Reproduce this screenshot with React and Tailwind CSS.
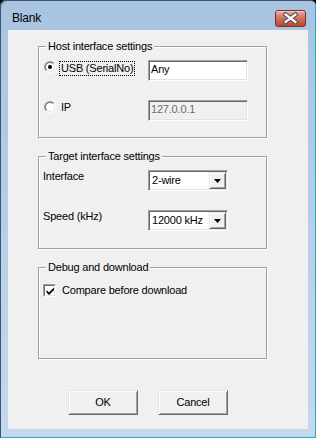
import React from "react";

// classic 3D edges
const SUNKEN =
  "border border-t-[#a0a0a0] border-l-[#a0a0a0] border-r-white border-b-white shadow-[inset_1px_1px_0_#696969,inset_-1px_-1px_0_#e3e3e3]";
const RAISED =
  "border border-t-[#e3e3e3] border-l-[#e3e3e3] border-r-[#696969] border-b-[#696969] shadow-[inset_1px_1px_0_#fff,inset_-1px_-1px_0_#a0a0a0]";

function Group({ title, children, className = "" }) {
  return (
    <div className={`w-[229px] border border-[#a0a0a0] shadow-[inset_1px_1px_0_#fff,1px_1px_0_#fff] ${className}`}>
      <div className="-mt-[7px] ml-[7px] w-fit bg-[#f0f0f0] px-[2px] leading-[13px]">{title}</div>
      {children}
    </div>
  );
}

function Radio({ checked }) {
  return (
    <div className="w-[12px] h-[12px] rounded-full border border-t-[#a0a0a0] border-l-[#a0a0a0] border-r-white border-b-white">
      <div className="w-full h-full rounded-full border border-t-[#696969] border-l-[#696969] border-r-[#e3e3e3] border-b-[#e3e3e3] bg-white flex items-center justify-center">
        {checked && <div className="w-[4px] h-[4px] rounded-full bg-black" />}
      </div>
    </div>
  );
}

function Combo({ value }) {
  return (
    <div className={`w-[80px] h-[21px] bg-white p-[1px] flex ${SUNKEN}`}>
      <div className="flex-1 pl-[2px] leading-[17px] whitespace-nowrap overflow-hidden">{value}</div>
      <div className={`w-[17px] h-[17px] bg-[#f0f0f0] flex items-center justify-center ${RAISED}`}>
        <svg width="7" height="4" viewBox="0 0 7 4">
          <path d="M0 0H7L3.5 4Z" fill="#000" />
        </svg>
      </div>
    </div>
  );
}

function Button({ children }) {
  return (
    <div className={`w-[70px] h-[25px] bg-[#f0f0f0] flex items-center justify-center leading-[13px] ${RAISED}`}>
      {children}
    </div>
  );
}

export default function App() {
  return (
    <div className="w-[316px] h-[438px] bg-black">
      <div className="w-[316px] h-[438px] rounded-t-[6px] px-[8px] flex flex-col bg-linear-to-b from-[#a9c4e0] to-[#c3d9ef] shadow-[inset_1px_1px_0_#3d5570,inset_-1px_-1px_0_#2aa5cc] font-['Liberation_Sans',Arial,sans-serif] text-black">
        {/* title bar */}
        <div className="h-[30px] flex items-start">
          <div className="ml-[4px] mt-[11px] text-[12px] leading-[15px] tracking-[-0.2px]">Blank</div>
          <div className="ml-auto mt-[10px] mr-[2px] w-[31px] h-[17px] rounded-[3px] border border-[#7a3026] bg-linear-to-b from-[#e6ac9e] via-[#d0705c] to-[#c0452f] shadow-[inset_0_1px_0_#f3cfc6] flex items-center justify-center">
            <svg width="29" height="15" viewBox="0 0 29 15">
              <path d="M9.5 3.5L19.5 11M19.5 3.5L9.5 11" stroke="#4b4b4b" strokeWidth="4.2" strokeLinecap="square" />
              <path d="M9.5 3.5L19.5 11M19.5 3.5L9.5 11" stroke="#fff" strokeWidth="2.2" strokeLinecap="square" />
            </svg>
          </div>
        </div>

        {/* client area */}
        <div className="h-[399px] bg-[#f0f0f0] pl-[30px] pt-[16px] text-[11px] tracking-[-0.2px]">
          <Group title="Host interface settings">
            <div className="pl-[5px] pt-[7px] pb-[16px]">
              <div className="flex h-[21px]">
                <div className="w-[15px] pt-[1px]">
                  <Radio checked />
                </div>
                <div className="w-[89px]">
                  <span className="inline-block border border-dotted border-black px-[1px] leading-[13px]">USB (SerialNo)</span>
                </div>
                <div className={`w-[100px] h-[21px] bg-white pl-[2px] pt-[2px] leading-[13px] ${SUNKEN}`}>Any</div>
              </div>
              <div className="flex h-[21px] mt-[19px]">
                <div className="w-[15px] pt-[1px]">
                  <Radio />
                </div>
                <div className="w-[89px] pl-[2px] pt-[1px] leading-[13px]">IP</div>
                <div className={`w-[100px] h-[21px] bg-[#f0f0f0] text-[#6d6d6d] pl-[2px] pt-[2px] leading-[13px] ${SUNKEN}`}>127.0.0.1</div>
              </div>
            </div>
          </Group>

          <Group title="Target interface settings" className="mt-[18px]">
            <div className="pl-[4px] pt-[7px] pb-[17px]">
              <div className="flex h-[21px]">
                <div className="w-[105px] leading-[13px]">Interface</div>
                <Combo value="2-wire" />
              </div>
              <div className="flex h-[21px] mt-[19px]">
                <div className="w-[105px] leading-[13px]">Speed (kHz)</div>
                <Combo value="12000 kHz" />
              </div>
            </div>
          </Group>

          <Group title="Debug and download" className="mt-[18px]">
            <div className="pl-[4px] pt-[10px] pb-[61px]">
              <div className="flex items-center h-[13px]">
                <div className="w-[13px] h-[13px] border border-t-[#a0a0a0] border-l-[#a0a0a0] border-r-white border-b-white">
                  <div className="w-full h-full border border-t-[#696969] border-l-[#696969] border-r-[#e3e3e3] border-b-[#e3e3e3] bg-white flex items-center justify-center">
                    <svg width="8" height="8" viewBox="0 0 8 8">
                      <path d="M0.5 3V5.5L3 8L8 3V0.5L3 5.5Z" fill="#000" />
                    </svg>
                  </div>
                </div>
                <div className="ml-[6px] leading-[13px]">Compare before download</div>
              </div>
            </div>
          </Group>

          <div className="mt-[31px] ml-[30px] flex gap-[20px]">
            <Button>OK</Button>
            <Button>Cancel</Button>
          </div>
        </div>
      </div>
    </div>
  );
}
